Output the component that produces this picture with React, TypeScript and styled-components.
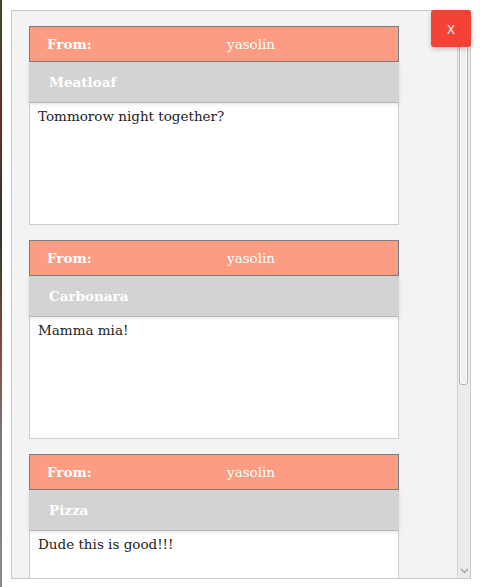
import React from "react";
import styled, { createGlobalStyle } from "styled-components";

const Global = createGlobalStyle`
  html, body { margin: 0; padding: 0; background: #ffffff; }
  body { font-family: "DejaVu Serif", "Liberation Serif", serif; }
`;

const Page = styled.div`
  display: flex;
  height: 587px;
  width: 480px;
  overflow: hidden;
`;

const EdgeStrip = styled.div`
  width: 2px;
  flex: none;
  background: linear-gradient(
    to bottom,
    #3b4a2e 0%,
    #6b2a2a 20%,
    #2f3a2a 40%,
    #8a4a3a 60%,
    #7a7a7a 75%,
    #8a8a8a 100%
  );
`;

const Backdrop = styled.div`
  flex: 1;
  padding: 10px 0 0 9px;
`;

const Panel = styled.div`
  position: relative;
  width: 458px;
  height: 567px;
  border: 1px solid #c9c9c9;
  background: #f3f3f3;
  display: flex;
`;

const Scroller = styled.div`
  flex: 1;
  min-width: 0;
  overflow: hidden;
  padding: 15px 17px;
  display: flex;
  flex-direction: column;
  gap: 15px;
`;

const Rail = styled.div`
  width: 12px;
  flex: none;
  display: flex;
  flex-direction: column;
  background: #ebebeb;
  border-left: 1px solid #d2d2d2;
`;

const RailButton = styled.div`
  height: 15px;
  flex: none;
  display: flex;
  align-items: center;
  justify-content: center;
`;

const Track = styled.div`
  flex: 1;
  display: flex;
  flex-direction: column;
  padding: 0 2px 0 1px;
`;

const Thumb = styled.div`
  height: 357px;
  border: 1px solid #b4b4b4;
  border-radius: 3px;
  background: #efefef;
  box-shadow: inset 0 0 0 1px #fafafa;
`;

const CloseButton = styled.button`
  position: absolute;
  top: -1px;
  right: -1px;
  width: 40px;
  height: 37px;
  border: none;
  border-radius: 3px;
  background: #f44336;
  color: #ffffff;
  font-family: "Open Sans", "Liberation Sans", sans-serif;
  font-size: 13px;
  padding: 0;
  box-shadow: 0 2px 5px rgba(0, 0, 0, 0.2);
  cursor: pointer;
  z-index: 2;
`;

const Card = styled.div`
  width: 370px;
  flex: none;
  display: flex;
  flex-direction: column;
`;

const Header = styled.div`
  display: grid;
  grid-template-columns: 180px 1fr;
  height: 34px;
  align-items: center;
  padding: 0 17px;
  border: 1px solid #7d7d7d;
  background: #fb9c83;
  color: #ffffff;
  font-size: 13.5px;
`;

const Label = styled.span`
  font-weight: bold;
`;

const Sender = styled.span`
  font-weight: normal;
`;

const Subject = styled.div`
  height: 40px;
  display: flex;
  align-items: center;
  padding: 0 20px;
  background: #d3d3d3;
  color: #ffffff;
  font-size: 13.5px;
  font-weight: bold;
  box-shadow: 0 2px 4px rgba(0, 0, 0, 0.12);
  position: relative;
  z-index: 1;
`;

const Body = styled.div`
  box-sizing: border-box;
  height: 123px;
  padding: 4px 8px;
  border: 1px solid #cccccc;
  background: #ffffff;
  color: #222222;
  font-size: 13.5px;
  line-height: 18px;
`;

const messages = [
  { from: "yasolin", subject: "Meatloaf", body: "Tommorow night together?" },
  { from: "yasolin", subject: "Carbonara", body: "Mamma mia!" },
  { from: "yasolin", subject: "Pizza", body: "Dude this is good!!!" },
];

export default function App() {
  return (
    <>
      <Global />
      <Page>
        <EdgeStrip />
        <Backdrop>
          <Panel>
            <CloseButton>X</CloseButton>
            <Scroller>
              {messages.map((m, i) => (
                <Card key={i}>
                  <Header>
                    <Label>From:</Label>
                    <Sender>{m.from}</Sender>
                  </Header>
                  <Subject>{m.subject}</Subject>
                  <Body>{m.body}</Body>
                </Card>
              ))}
            </Scroller>
            <Rail>
              <RailButton>
                <svg width="9" height="6" viewBox="0 0 9 6">
                  <path d="M1 5 L4.5 1.5 L8 5" fill="none" stroke="#9a9a9a" strokeWidth="1.2" />
                </svg>
              </RailButton>
              <Track>
                <Thumb />
              </Track>
              <RailButton>
                <svg width="9" height="6" viewBox="0 0 9 6">
                  <path d="M1 1 L4.5 4.5 L8 1" fill="none" stroke="#9a9a9a" strokeWidth="1.2" />
                </svg>
              </RailButton>
            </Rail>
          </Panel>
        </Backdrop>
      </Page>
    </>
  );
}
